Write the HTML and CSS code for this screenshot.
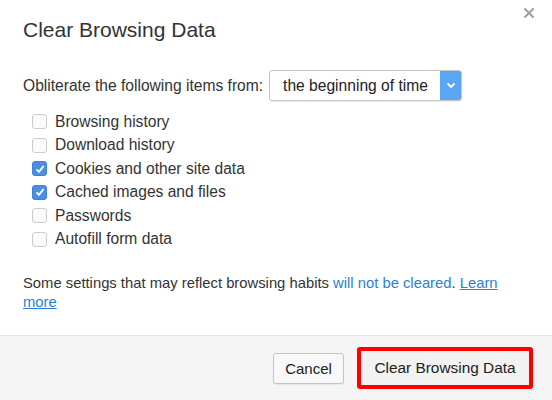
FILE: index.html
```html
<!DOCTYPE html>
<html>
<head>
<meta charset="utf-8">
<link rel="stylesheet" href="styles.css">
</head>
<body>
<div class="dialog">
  <div class="header">
    <h1 class="title">Clear Browsing Data</h1>
    <span class="close" aria-label="Close">
      <svg width="10" height="10" viewBox="0 0 10 10"><path d="M1 1L9 9M9 1L1 9" stroke="#a0a0a0" stroke-width="2" stroke-linecap="square"/></svg>
    </span>
  </div>
  <div class="content">
    <div class="range-row">
      <span class="range-label">Obliterate the following items from:</span>
      <span class="select">
        <span class="select-value">the beginning of time</span>
        <span class="select-arrow">
          <svg width="10" height="7" viewBox="0 0 10 7"><path d="M1.5 1.5L5 5L8.5 1.5" fill="none" stroke="#fff" stroke-width="1.8"/></svg>
        </span>
      </span>
    </div>
    <ul class="items">
      <li class="item"><span class="box"></span>Browsing history</li>
      <li class="item"><span class="box"></span>Download history</li>
      <li class="item"><span class="box checked"><svg width="12" height="12" viewBox="0 0 12 12"><path d="M2.5 6.3L5 8.8L9.6 3" fill="none" stroke="#fff" stroke-width="1.9"/></svg></span>Cookies and other site data</li>
      <li class="item"><span class="box checked"><svg width="12" height="12" viewBox="0 0 12 12"><path d="M2.5 6.3L5 8.8L9.6 3" fill="none" stroke="#fff" stroke-width="1.9"/></svg></span>Cached images and files</li>
      <li class="item"><span class="box"></span>Passwords</li>
      <li class="item"><span class="box"></span>Autofill form data</li>
    </ul>
    <p class="note"><span>Some settings that may reflect browsing habits </span><span class="blue">will not be cleared</span><span>. </span><a class="link" href="#">Learn</a> <a class="link" href="#">more</a></p>
  </div>
  <div class="footer">
    <button class="btn">Cancel</button>
    <button class="btn primary">Clear Browsing Data</button>
  </div>
</div>
</body>
</html>
```

FILE: styles.css
```css
* { box-sizing: border-box; }
html, body { margin: 0; padding: 0; background: #fff; }
body {
  font-family: "Liberation Sans", Arial, sans-serif;
  color: #333;
  width: 552px;
  height: 400px;
  overflow: hidden;
}
.dialog {
  width: 552px;
  height: 400px;
  display: flex;
  flex-direction: column;
}
.header {
  position: relative;
  padding: 18px 23px 0 23px;
}
.title {
  margin: 0;
  font-size: 21px;
  line-height: 24px;
  font-weight: normal;
  color: #333;
}
.close {
  position: absolute;
  top: 8px;
  right: 18px;
  width: 10px;
  height: 10px;
  display: flex;
}
.content {
  flex: 1;
  padding: 28px 23px 0 23px;
}
.range-row {
  display: flex;
  align-items: center;
  gap: 6px;
  height: 31px;
  font-size: 15.6px;
}
.select {
  display: flex;
  height: 31px;
  width: 193px;
  border: 1px solid #c6c6c6;
  border-radius: 3px;
  box-shadow: 0 1px 1px rgba(0,0,0,0.08);
  background: #fff;
  overflow: hidden;
}
.select-value {
  flex: 1;
  display: flex;
  align-items: center;
  padding-left: 13px;
  color: #222;
  font-size: 15.6px;
}
.select-arrow {
  width: 21px;
  background: #5aa6f5;
  display: flex;
  align-items: center;
  justify-content: center;
}
.items {
  list-style: none;
  margin: 9px 0 0 0;
  padding: 0 0 0 9px;
}
.item {
  display: flex;
  align-items: center;
  height: 23.5px;
  font-size: 15.6px;
  color: #333;
}
.box {
  width: 15px;
  height: 15px;
  border: 1px solid #cbcbcb;
  border-radius: 3px;
  background: #fbfbfb;
  margin-right: 8px;
  display: flex;
  align-items: center;
  justify-content: center;
}
.box.checked {
  background: #4a8fe3;
  border-color: #3f82d6;
}
.note {
  margin: 23px 0 0 0;
  font-size: 14.8px;
  line-height: 19px;
  color: #333;
}
.blue { color: #2b7fd8; }
.link { color: #2b7fd8; text-decoration: underline; }
.footer {
  height: 65px;
  border-top: 1px solid #e4e4e4;
  background: #f5f5f5;
  display: flex;
  align-items: center;
  justify-content: flex-end;
  gap: 13px;
  padding-right: 19px;
}
.btn {
  font-family: "Liberation Sans", Arial, sans-serif;
  font-size: 15px;
  color: #222;
  height: 31px;
  width: 71px;
  border: 1px solid #c4c4c4;
  border-radius: 3px;
  background: #f8f8f8;
  box-shadow: 0 1px 1px rgba(0,0,0,0.06);
  padding: 0;
}
.btn.primary {
  font-size: 15.4px;
  width: 176px;
  height: 42px;
  border: 4px solid #ff0000;
  border-radius: 3px;
  background: #f2f2f2;
  box-shadow: none;
}
```
